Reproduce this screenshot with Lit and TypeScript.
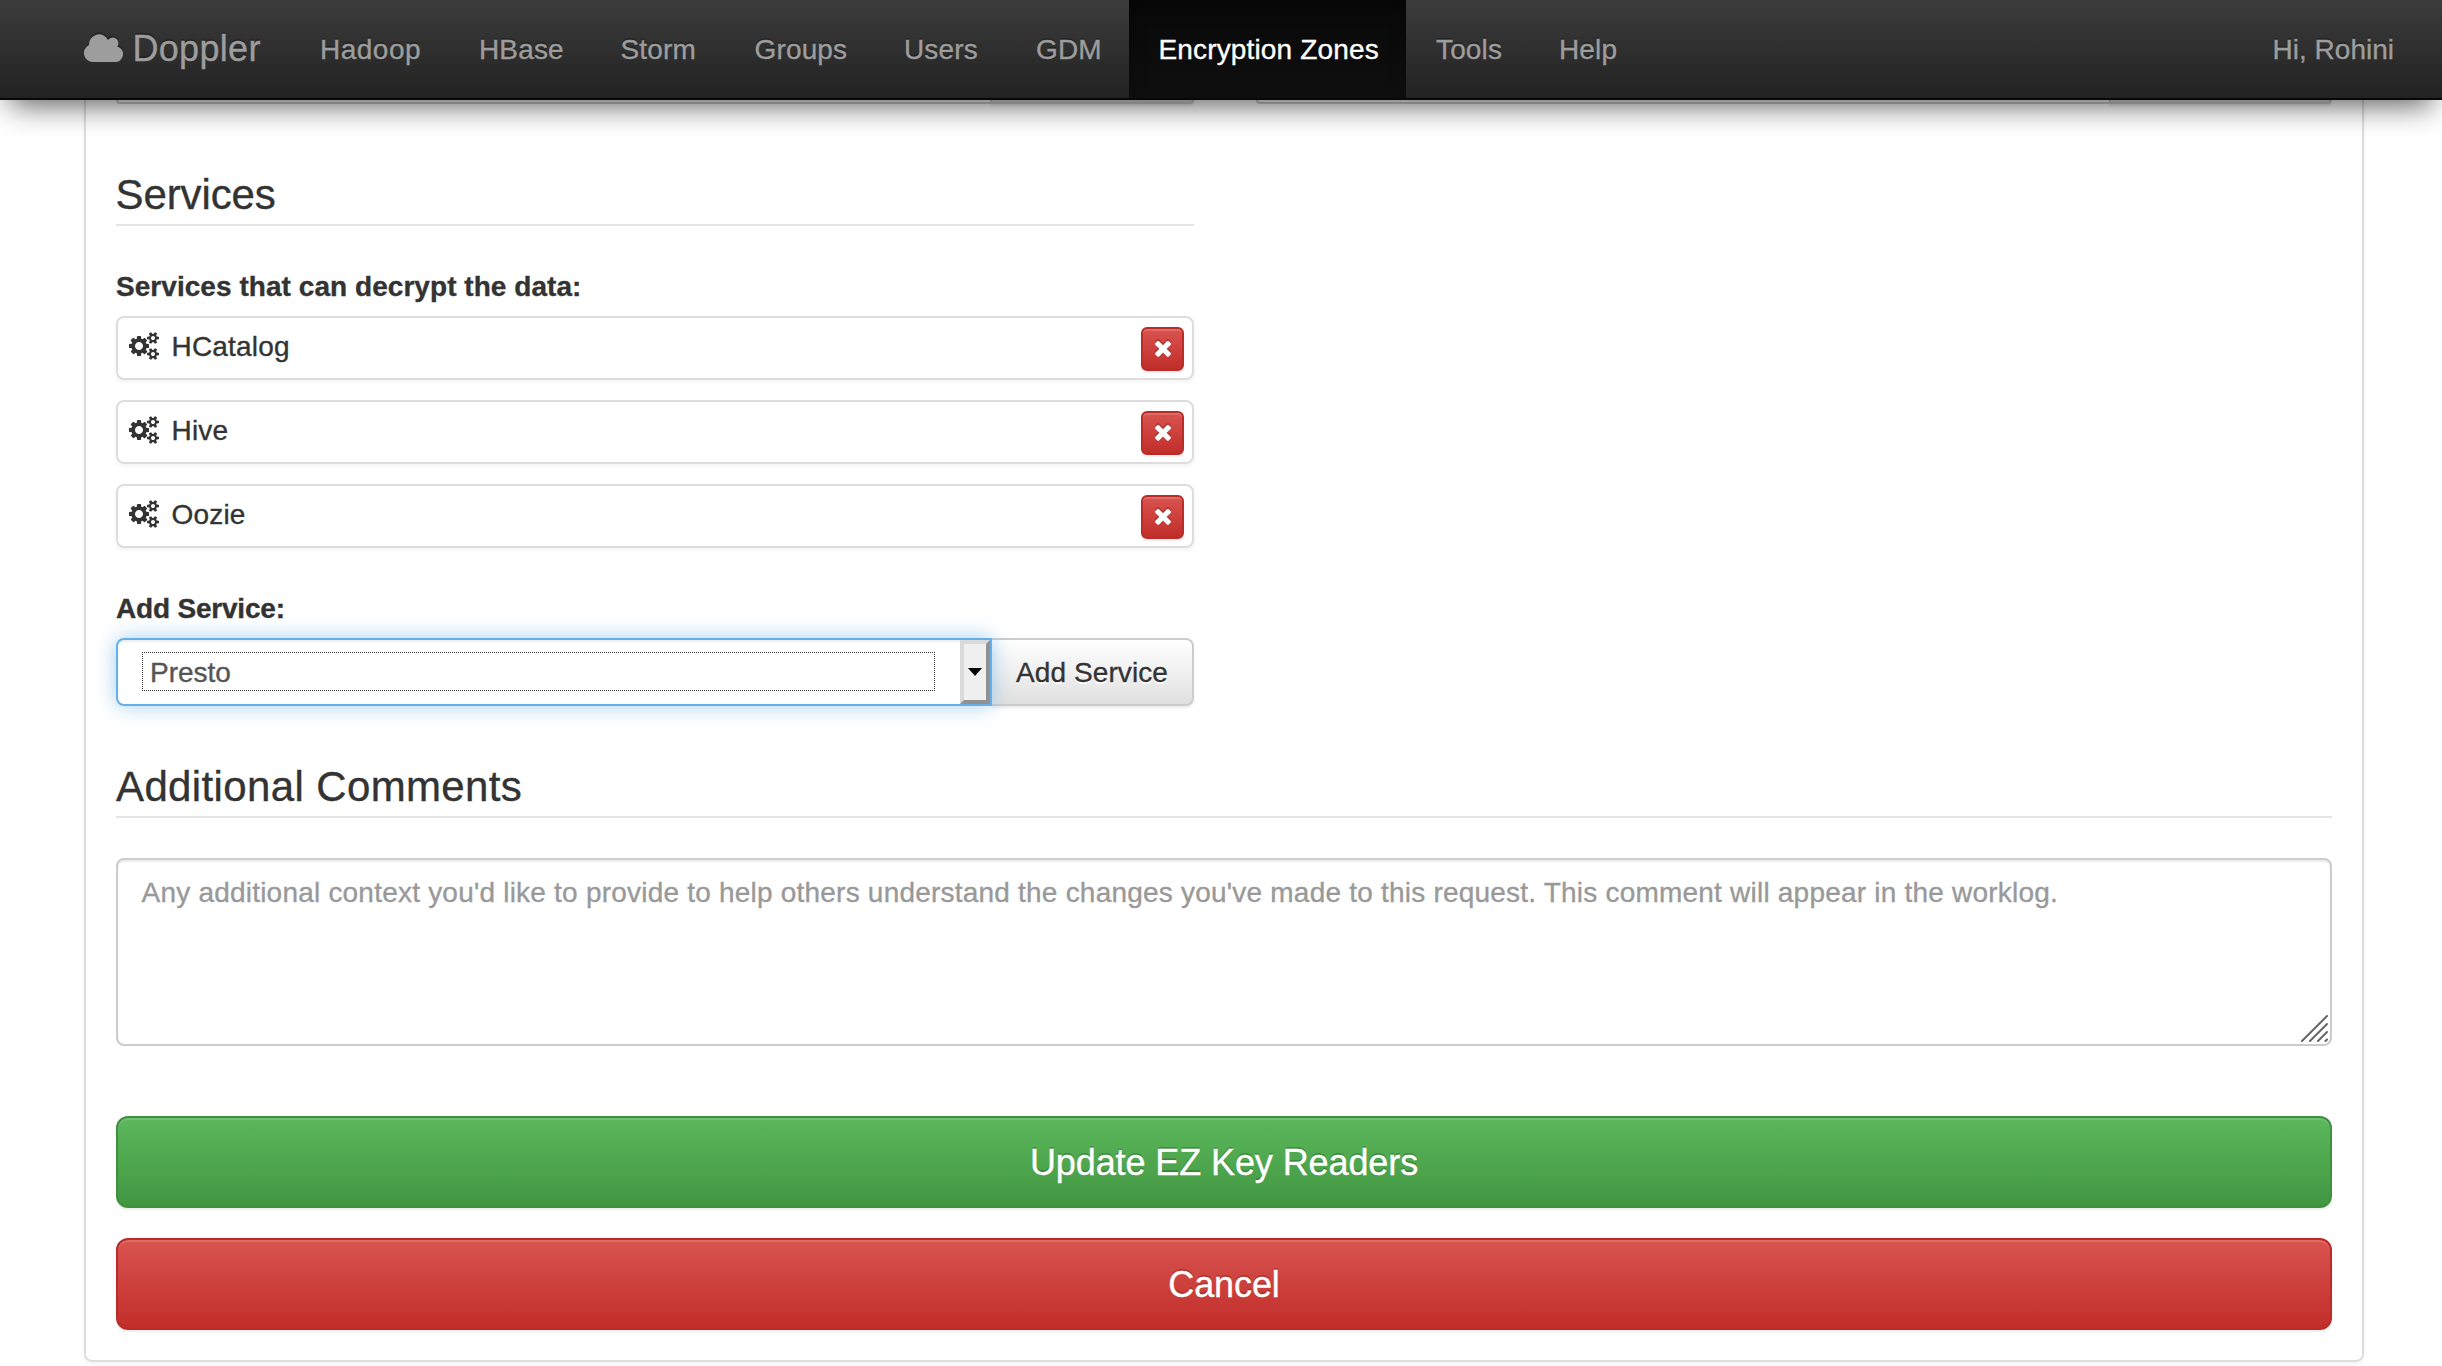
import { LitElement, html, css, svg } from "lit";
import { customElement, property } from "lit/decorators.js";

const COGS =
  "M896 896q0-106-75-181t-181-75-181 75-75 181 75 181 181 75 181-75 75-181zm768 512q0-52-38-90t-90-38-90 38-38 90q0 53 37.5 90.5t90.5 37.5 90.5-37.5 37.5-90.5zm0-1024q0-52-38-90t-90-38-90 38-38 90q0 53 37.5 90.5t90.5 37.5 90.5-37.5 37.5-90.5zm-384 421v185q0 10-7 19.5t-16 10.5l-155 24q-11 35-32 76 34 48 90 115 7 11 7 20 0 12-7 19-23 30-82.5 89.5t-78.5 59.5q-11 0-21-7l-115-90q-37 19-77 31-11 108-23 155-7 24-30 24h-186q-11 0-20-7.5t-10-17.5l-23-153q-34-10-75-31l-118 89q-7 7-20 7-11 0-21-8-144-133-144-160 0-9 7-19 10-14 41-53t47-61q-23-44-35-82l-152-24q-10-1-17-9.5t-7-19.5v-185q0-10 7-19.5t16-10.5l155-24q11-35 32-76-34-48-90-115-7-11-7-20 0-12 7-20 22-30 82-89t79-59q11 0 21 7l115 90q34-18 77-32 11-108 23-154 7-24 30-24h186q11 0 20 7.5t10 17.5l23 153q34 10 75 31l118-89q8-7 20-7 11 0 21 8 144 133 144 160 0 8-7 19-12 16-42 54t-45 60q23 48 34 82l152 23q10 2 17 10.5t7 19.5zm640 533v140q0 16-149 31-12 27-30 52 51 113 51 138 0 4-4 7-122 71-124 71-8 0-46-47t-52-68q-20 2-30 2t-30-2q-14 21-52 68t-46 47q-2 0-124-71-4-3-4-7 0-25 51-138-18-25-30-52-149-15-149-31v-140q0-16 149-31 13-29 30-52-51-113-51-138 0-4 4-7 4-2 35-20t59-34 30-16q8 0 46 46.5t52 67.5q20-2 30-2t30 2q51-71 92-112l6-2q4 0 124 70 4 3 4 7 0 25-51 138 17 23 30 52 149 15 149 31zm0-1024v140q0 16-149 31-12 27-30 52 51 113 51 138 0 4-4 7-122 71-124 71-8 0-46-47t-52-68q-20 2-30 2t-30-2q-14 21-52 68t-46 47q-2 0-124-71-4-3-4-7 0-25 51-138-18-25-30-52-149-15-149-31v-140q0-16 149-31 13-29 30-52-51-113-51-138 0-4 4-7 4-2 35-20t59-34 30-16q8 0 46 46.5t52 67.5q20-2 30-2t30 2q51-71 92-112l6-2q4 0 124 70 4 3 4 7 0 25-51 138 17 23 30 52 149 15 149 31z";

const TIMES =
  "M1490 1322q0 40-28 68l-136 136q-28 28-68 28t-68-28l-294-294-294 294q-28 28-68 28t-68-28l-136-136q-28-28-28-68t28-68l294-294-294-294q-28-28-28-68t28-68l136-136q28-28 68-28t68 28l294 294 294-294q28-28 68-28t68 28l136 136q28 28 28 68t-28 68l-294 294 294 294q28 28 28 68z";

const CLOUD = "M9 28A9 9 0 0 1 5 10.9A10 10 0 0 1 24 6A5.2 5.2 0 0 1 33.3 12.5A7.9 7.9 0 0 1 31 28Z";

const NAV = ["Hadoop", "HBase", "Storm", "Groups", "Users", "GDM", "Encryption Zones", "Tools", "Help"];
const SERVICES = ["HCatalog", "Hive", "Oozie"];

@customElement("top-nav")
export class TopNav extends LitElement {
  @property() active = "";

  static styles = css`
    :host {
      display: block;
      position: relative;
      z-index: 5;
    }
    .bar {
      box-sizing: border-box;
      height: 100px;
      display: flex;
      justify-content: space-between;
      padding: 0 48px 0 84px;
      border-bottom: 2px solid #080808;
      background: linear-gradient(#3c3c3c, #222);
      box-shadow: 0 15px 30px -10px rgba(0, 0, 0, 0.65);
      color: #9d9d9d;
      font-size: 28px;
      line-height: 100px;
      letter-spacing: 0.15px;
      text-shadow: 0 -2px 0 rgba(0, 0, 0, 0.25);
      white-space: nowrap;
    }
    .left {
      display: grid;
      grid-template-columns: 205px 159px 141.5px 134px 149.5px 132px 124px 277px 122px 120px;
    }
    .brand {
      display: flex;
      align-items: center;
      gap: 9.5px;
      height: 98px;
      font-size: 36px;
      letter-spacing: 0.3px;
    }
    .cloud {
      width: 39px;
      height: 28px;
      margin-top: -2px;
      fill: #9d9d9d;
      filter: drop-shadow(0 -2px 0 rgba(0, 0, 0, 0.25));
    }
    .item {
      height: 98px;
      padding-left: 31px;
    }
    .item:nth-child(2) {
      letter-spacing: 0.5px;
    }
    .item:nth-child(9) {
      padding-left: 30px;
    }
    .item.on {
      padding-left: 29.5px;
      color: #fff;
      background: linear-gradient(#080808, #0f0f0f);
      box-shadow: inset 0 6px 18px rgba(0, 0, 0, 0.25);
    }
    .user {
      letter-spacing: 0;
    }
  `;

  render() {
    return html`<nav class="bar">
      <div class="left">
        <div class="brand">
          <svg class="cloud" viewBox="0 0 39 28">${svg`<path d=${CLOUD} />`}</svg>
          <span>Doppler</span>
        </div>
        ${NAV.map((n) => html`<div class="item ${n === this.active ? "on" : ""}">${n}</div>`)}
      </div>
      <div class="user">Hi, Rohini</div>
    </nav>`;
  }
}

@customElement("service-row")
export class ServiceRow extends LitElement {
  @property() name = "";

  static styles = css`
    :host {
      display: block;
    }
    .row {
      box-sizing: border-box;
      height: 64px;
      display: flex;
      align-items: center;
      padding: 0 8px 0 11px;
      border: 2px solid #ddd;
      border-radius: 8px;
      box-shadow: 0 2px 4px rgba(0, 0, 0, 0.05);
    }
    .cogs {
      width: 30px;
      height: 28px;
      margin-bottom: 4px;
      fill: #333;
    }
    .name {
      flex: 1;
      margin: 0 0 2px 12.5px;
      letter-spacing: 0.2px;
    }
    .remove {
      box-sizing: border-box;
      width: 43px;
      height: 44px;
      margin-top: 2px;
      display: flex;
      align-items: center;
      justify-content: center;
      border: 2px solid #b92c28;
      border-radius: 6px;
      background: linear-gradient(#d9534f, #c12e2a);
      box-shadow: inset 0 2px 0 rgba(255, 255, 255, 0.15), 0 2px 2px rgba(0, 0, 0, 0.075);
    }
    .times {
      width: 24px;
      height: 24px;
      margin-bottom: 2px;
      fill: #fff;
      filter: drop-shadow(0 -2px 0 rgba(0, 0, 0, 0.2));
    }
  `;

  render() {
    return html`<div class="row">
      <svg class="cogs" viewBox="0 0 1920 1792">${svg`<path d=${COGS} />`}</svg>
      <span class="name">${this.name}</span>
      <div class="remove"><svg class="times" viewBox="0 0 1792 1792">${svg`<path d=${TIMES} />`}</svg></div>
    </div>`;
  }
}

@customElement("app-root")
export class AppRoot extends LitElement {
  static styles = css`
    :host {
      display: block;
      height: 1366px;
      overflow: hidden;
      background: #fff;
      color: #333;
      font-family: "Liberation Sans", Arial, sans-serif;
      font-size: 28px;
      line-height: 40px;
      -webkit-text-stroke: 0.35px currentColor;
    }
    .panel {
      box-sizing: border-box;
      height: 1262px;
      margin: 0 78px 0 84px;
      padding: 0 30px;
      border: 2px solid #ddd;
      border-top: 0;
      border-radius: 0 0 8px 8px;
      box-shadow: 0 2px 4px rgba(0, 0, 0, 0.05);
    }
    .cut {
      display: grid;
      grid-template-columns: 1078px 1076px;
      gap: 62px;
    }
    .cut-group {
      display: flex;
      height: 4px;
    }
    .cut-input,
    .cut-btn {
      box-sizing: border-box;
      border: 2px solid #ccc;
      border-top: 0;
    }
    .cut-input {
      flex: 1;
      border-right: 0;
      border-radius: 0 0 0 8px;
    }
    .cut-btn {
      width: 204px;
      border-radius: 0 0 8px 0;
      background: #e0e0e0;
      box-shadow: 0 2px 2px rgba(0, 0, 0, 0.075);
    }
    .cut-btn.wide {
      width: 223px;
    }
    .half {
      width: 1078px;
    }
    .legend {
      box-sizing: border-box;
      height: 62px;
      border-bottom: 2px solid #e5e5e5;
      font-size: 42px;
      line-height: 62px;
    }
    .first {
      margin-top: 60px;
      letter-spacing: -0.1px;
      text-indent: -0.5px;
    }
    .label {
      font-weight: bold;
      height: 40px;
      line-height: 42px;
    }
    .decrypt {
      margin: 40px 0 10px;
      letter-spacing: 0.05px;
    }
    .list {
      display: flex;
      flex-direction: column;
      gap: 20px;
    }
    .add {
      margin: 40px 0 10px;
      letter-spacing: -0.2px;
    }
    .group {
      display: flex;
      height: 68px;
    }
    .select {
      position: relative;
      z-index: 1;
      box-sizing: border-box;
      width: 876px;
      display: flex;
      align-items: stretch;
      justify-content: space-between;
      padding-left: 24px;
      border: 2px solid #66afe9;
      border-radius: 8px 0 0 8px;
      background: #fff;
      color: #555;
      box-shadow: inset 0 2px 2px rgba(0, 0, 0, 0.075), 0 0 20px rgba(102, 175, 233, 0.6);
    }
    .focus {
      box-sizing: border-box;
      width: 793px;
      height: 39px;
      margin-top: 12px;
      padding-left: 7px;
      border: 1px dotted #333;
      line-height: 40px;
    }
    .drop {
      box-sizing: border-box;
      width: 30px;
      display: flex;
      align-items: center;
      justify-content: center;
      border: 4px solid;
      border-color: #dadada #919191 #919191 #dadada;
      background: #efefef;
    }
    .tri {
      width: 14px;
      height: 8px;
      fill: #000;
    }
    .add-btn {
      box-sizing: border-box;
      flex: 1;
      border: 2px solid #ccc;
      border-left: 0;
      border-radius: 0 8px 8px 0;
      background: linear-gradient(#fff, #e0e0e0);
      box-shadow: 0 2px 2px rgba(0, 0, 0, 0.075);
      text-align: center;
      line-height: 66px;
      letter-spacing: 0.1px;
      text-shadow: 0 2px 0 #fff;
    }
    .comments {
      margin-top: 50px;
      letter-spacing: 0.37px;
    }
    .area {
      box-sizing: border-box;
      height: 188px;
      margin-top: 40px;
      display: flex;
      justify-content: space-between;
      padding: 13px 2px 2px 23.5px;
      border: 2px solid #ccc;
      border-radius: 8px;
      box-shadow: inset 0 2px 2px rgba(0, 0, 0, 0.075);
      color: #999;
    }
    .hint {
      letter-spacing: 0.213px;
      white-space: nowrap;
    }
    .grip {
      align-self: flex-end;
      width: 27px;
      height: 27px;
      fill: none;
      stroke: #666;
      stroke-width: 2;
      stroke-linecap: round;
    }
    .big {
      box-sizing: border-box;
      height: 92px;
      border: 2px solid;
      border-radius: 12px;
      color: #fff;
      font-size: 36px;
      line-height: 90px;
      letter-spacing: -0.1px;
      text-align: center;
      text-shadow: 0 -2px 0 rgba(0, 0, 0, 0.2);
      box-shadow: inset 0 2px 0 rgba(255, 255, 255, 0.15), 0 2px 2px rgba(0, 0, 0, 0.075);
    }
    .green {
      margin-top: 70px;
      border-color: #3e8f3e;
      background: linear-gradient(#5cb85c, #419641);
    }
    .red {
      margin-top: 30px;
      border-color: #b92c28;
      background: linear-gradient(#d9534f, #c12e2a);
    }
  `;

  render() {
    return html`
      <top-nav active="Encryption Zones"></top-nav>
      <main class="panel">
        <div class="cut">
          <div class="cut-group"><div class="cut-input"></div><div class="cut-btn"></div></div>
          <div class="cut-group"><div class="cut-input"></div><div class="cut-btn wide"></div></div>
        </div>
        <section class="half">
          <div class="legend first">Services</div>
          <div class="label decrypt">Services that can decrypt the data:</div>
          <div class="list">${SERVICES.map((s) => html`<service-row name=${s}></service-row>`)}</div>
          <div class="label add">Add Service:</div>
          <div class="group">
            <div class="select">
              <div class="focus">Presto</div>
              <div class="drop"><svg class="tri" viewBox="0 0 14 8"><path d="M0 0H14L7 8Z" /></svg></div>
            </div>
            <div class="add-btn">Add Service</div>
          </div>
        </section>
        <div class="legend comments">Additional Comments</div>
        <div class="area">
          <span class="hint"
            >Any additional context you'd like to provide to help others understand the changes you've made to this
            request. This comment will appear in the worklog.</span
          >
          <svg class="grip" viewBox="0 0 27 27">
            <path d="M1 26L26 1M9 26L26 9M17 26L26 17M24.5 26L26 24.5" />
          </svg>
        </div>
        <div class="big green">Update EZ Key Readers</div>
        <div class="big red">Cancel</div>
      </main>
    `;
  }
}
